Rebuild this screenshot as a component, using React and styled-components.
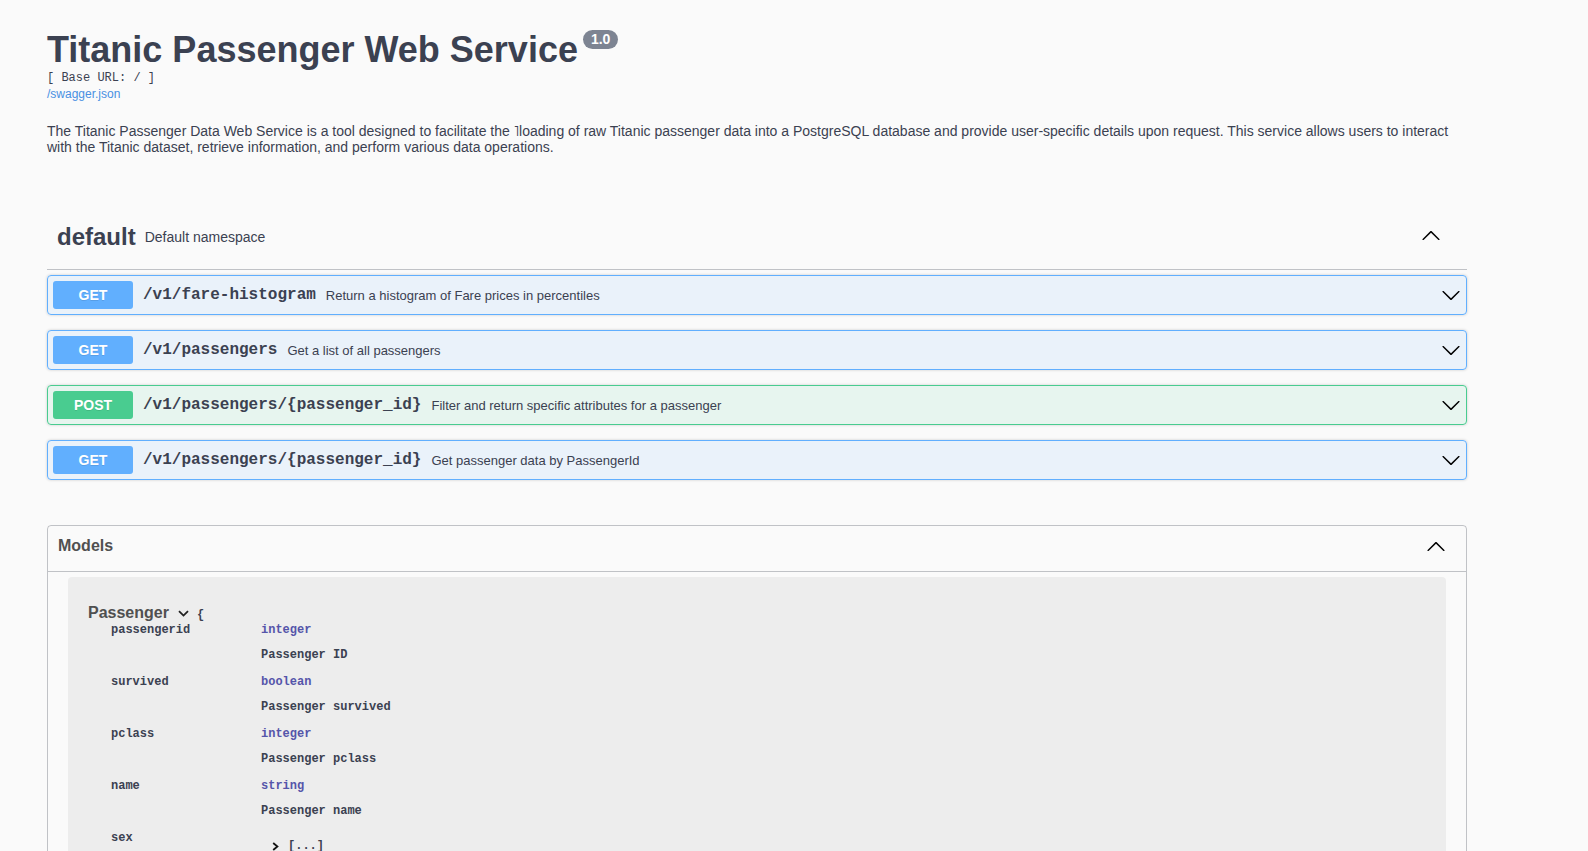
import React from 'react';
import styled, { createGlobalStyle, css } from 'styled-components';

const GlobalStyle = createGlobalStyle`
  html, body {
    margin: 0;
    padding: 0;
    overflow: hidden;
    background: #fafafa;
    font-family: "Liberation Sans", Arial, Helvetica, sans-serif;
    color: #3b4151;
  }
`;

const mono = `"Liberation Mono", "Courier New", Courier, monospace`;

const METHOD_COLORS = {
  GET: { main: '#61affe', bg: 'rgba(97, 175, 254, 0.1)' },
  POST: { main: '#49cc90', bg: 'rgba(73, 204, 144, 0.1)' },
};

const Wrapper = styled.div`
  width: 1420px;
  margin-left: 47px;
`;

const Info = styled.div`
  padding-top: 30px;
`;

const Title = styled.h2`
  display: flex;
  align-items: flex-start;
  margin: 0;
  font-size: 36px;
  line-height: 40px;
  font-weight: 700;
  color: #3b4151;
`;

const Version = styled.span`
  margin-left: 5px;
  padding: 2px 8px;
  border-radius: 57px;
  background: #7d8492;
  color: #fff;
  font-size: 14px;
  line-height: 15px;
  font-weight: 700;
`;

const BaseUrl = styled.div`
  margin-top: 1px;
  font-family: ${mono};
  font-size: 12px;
  line-height: 14px;
  color: #3b4151;
`;

const SpecLink = styled.a`
  display: block;
  margin-top: 2px;
  font-size: 12px;
  line-height: 15px;
  color: #4990e2;
  text-decoration: none;
`;

const Description = styled.p`
  margin: 21px 0 0;
  font-size: 14px;
  line-height: 16px;
  color: #3b4151;
`;

const TagSection = styled.div`
  margin-top: 50px;
`;

const TagHeader = styled.h3`
  display: flex;
  align-items: center;
  height: 64px;
  margin: 0 0 5px;
  padding: 0 26px 0 10px;
  border-bottom: 1px solid rgba(59, 65, 81, 0.3);
  font-size: 24px;
  font-weight: 700;
  color: #3b4151;
`;

const TagName = styled.span`
  flex: 1;
  display: flex;
  align-items: center;
`;

const TagNote = styled.small`
  margin-left: 9px;
  font-size: 14px;
  font-weight: 400;
`;

const TagChevron = styled.svg`
  margin-bottom: 4px;
`;

const Opblock = styled.div`
  margin-bottom: 15px;
  border-radius: 4px;
  box-shadow: 0 0 3px rgba(0, 0, 0, 0.19);
  ${({ $method }) => css`
    border: 1px solid ${METHOD_COLORS[$method].main};
    background: ${METHOD_COLORS[$method].bg};
  `}
`;

const Summary = styled.div`
  display: flex;
  align-items: center;
  padding: 5px;
`;

const Method = styled.span`
  min-width: 80px;
  padding: 6px 0;
  border-radius: 3px;
  background: ${({ $method }) => METHOD_COLORS[$method].main};
  color: #fff;
  font-size: 14px;
  line-height: 16px;
  font-weight: 700;
  text-align: center;
  text-shadow: 0 1px 0 rgba(0, 0, 0, 0.1);
`;

const Path = styled.span`
  padding: 0 10px;
  font-family: ${mono};
  font-size: 16px;
  font-weight: 700;
  color: #3b4151;
`;

const SummaryText = styled.span`
  flex: 1;
  font-size: 13px;
  color: #3b4151;
`;

const Models = styled.section`
  margin-top: 45px;
  border: 1px solid rgba(59, 65, 81, 0.3);
  border-radius: 4px;
  padding-bottom: 20px;
`;

const ModelsHeader = styled.h4`
  display: flex;
  align-items: center;
  margin: 0 0 5px;
  padding: 8px 20px 13px 10px;
  border-bottom: 1px solid rgba(59, 65, 81, 0.3);
  font-size: 16px;
  line-height: 24px;
  font-weight: 700;
  color: #505050;

  span {
    flex: 1;
  }
`;

const ModelContainer = styled.div`
  margin: 0 20px 15px;
  padding: 26px 20px 20px;
  border-radius: 4px;
  background: rgba(0, 0, 0, 0.05);
`;

const ModelTitleLine = styled.div`
  display: flex;
  align-items: center;
  height: 19px;
`;

const ModelTitle = styled.span`
  font-size: 16px;
  line-height: 18px;
  font-weight: 700;
  color: #505050;
`;

const ModelToggle = styled.svg`
  margin: 2px 8px 0 9px;
`;

const Brace = styled.span`
  font-family: ${mono};
  font-size: 12px;
  font-weight: 700;
  padding-top: 4px;
  color: #3b4151;
`;

const PropRow = styled.div`
  display: grid;
  grid-template-columns: 173px 1fr;
  padding-bottom: 11px;
  font-family: ${mono};
  font-size: 12px;
  line-height: 16px;
  font-weight: 700;
  color: #3b4151;
`;

const PropName = styled.div`
  padding-left: 23px;
`;

const PropType = styled.div`
  color: #55a;
`;

const PropDesc = styled.div`
  margin-top: 9px;
`;

const EnumLine = styled.div`
  display: flex;
  align-items: center;
  gap: 9px;
  padding: 8px 0 0 11px;
`;

const ChevronDown = () => (
  <svg width="20" height="20" viewBox="0 0 20 20" fill="#000">
    <path d="M17.418 6.109c.272-.268.709-.268.979 0s.271.701 0 .969l-7.908 7.83c-.27.268-.707.268-.979 0l-7.908-7.83c-.27-.268-.27-.701 0-.969.271-.268.709-.268.979 0L10 13.25l7.418-7.141z" />
  </svg>
);

const upPath =
  'M17.418 14.908c.272.268.709.268.979 0s.271-.701 0-.969l-7.908-7.83c-.27-.268-.707-.268-.979 0l-7.908 7.83c-.27.268-.27.701 0 .969.271.268.709.268.979 0L10 7.767l7.418 7.141z';

const operations = [
  { method: 'GET', path: '/v1/fare-histogram', text: 'Return a histogram of Fare prices in percentiles' },
  { method: 'GET', path: '/v1/passengers', text: 'Get a list of all passengers' },
  { method: 'POST', path: '/v1/passengers/{passenger_id}', text: 'Filter and return specific attributes for a passenger' },
  { method: 'GET', path: '/v1/passengers/{passenger_id}', text: 'Get passenger data by PassengerId' },
];

const properties = [
  { name: 'passengerid', type: 'integer', desc: 'Passenger ID' },
  { name: 'survived', type: 'boolean', desc: 'Passenger survived' },
  { name: 'pclass', type: 'integer', desc: 'Passenger pclass' },
  { name: 'name', type: 'string', desc: 'Passenger name' },
  { name: 'sex', enumerated: true },
];

const App = () => (
  <>
    <GlobalStyle />
    <Wrapper>
      <Info>
        <Title>
          Titanic Passenger Web Service
          <Version>1.0</Version>
        </Title>
        <BaseUrl>[ Base URL: / ]</BaseUrl>
        <SpecLink href="#">/swagger.json</SpecLink>
        <Description>
          The Titanic Passenger Data Web Service is a tool designed to facilitate the ˥loading of raw Titanic
          passenger data into a PostgreSQL database and provide user-specific details upon request. This service
          allows users to interact with the Titanic dataset, retrieve information, and perform various data
          operations.
        </Description>
      </Info>

      <TagSection>
        <TagHeader>
          <TagName>
            default
            <TagNote>Default namespace</TagNote>
          </TagName>
          <TagChevron width="20" height="20" viewBox="0 0 20 20" fill="#000">
            <path d={upPath} />
          </TagChevron>
        </TagHeader>
        {operations.map((op) => (
          <Opblock key={op.method + op.path} $method={op.method}>
            <Summary>
              <Method $method={op.method}>{op.method}</Method>
              <Path>{op.path}</Path>
              <SummaryText>{op.text}</SummaryText>
              <ChevronDown />
            </Summary>
          </Opblock>
        ))}
      </TagSection>

      <Models>
        <ModelsHeader>
          <span>Models</span>
          <svg width="20" height="20" viewBox="0 0 20 20" fill="#000">
            <path d={upPath} />
          </svg>
        </ModelsHeader>
        <ModelContainer>
          <ModelTitleLine>
            <ModelTitle>Passenger</ModelTitle>
            <ModelToggle width="11" height="7" viewBox="0 0 11 7">
              <polyline points="1,1.2 5.5,5.6 10,1.2" fill="none" stroke="#222" strokeWidth="1.8" />
            </ModelToggle>
            <Brace>{'{'}</Brace>
          </ModelTitleLine>
          {properties.map((p) => (
            <PropRow key={p.name}>
              <PropName>{p.name}</PropName>
              {p.enumerated ? (
                <EnumLine>
                  <svg width="7" height="9" viewBox="0 0 7 9">
                    <polyline points="1.2,1 5.4,4.5 1.2,8" fill="none" stroke="#111" strokeWidth="1.8" />
                  </svg>
                  <span>[...]</span>
                </EnumLine>
              ) : (
                <div>
                  <PropType>{p.type}</PropType>
                  <PropDesc>{p.desc}</PropDesc>
                </div>
              )}
            </PropRow>
          ))}
        </ModelContainer>
      </Models>
    </Wrapper>
  </>
);

export default App;
